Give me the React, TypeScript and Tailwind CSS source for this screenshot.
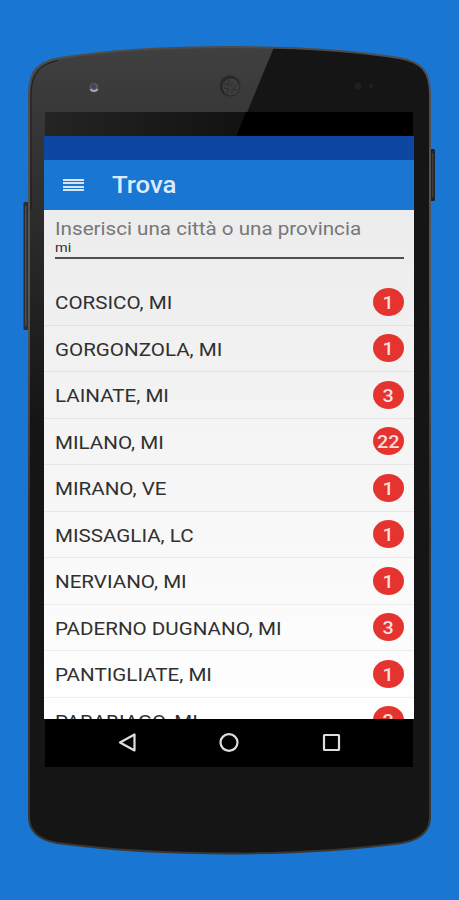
import { useState } from "react";

interface Place {
  name: string;
  count: number;
}

const places: Place[] = [
  { name: "CORSICO, MI", count: 1 },
  { name: "GORGONZOLA, MI", count: 1 },
  { name: "LAINATE, MI", count: 3 },
  { name: "MILANO, MI", count: 22 },
  { name: "MIRANO, VE", count: 1 },
  { name: "MISSAGLIA, LC", count: 1 },
  { name: "NERVIANO, MI", count: 1 },
  { name: "PADERNO DUGNANO, MI", count: 3 },
  { name: "PANTIGLIATE, MI", count: 1 },
  { name: "PARABIAGO, MI", count: 2 },
];

const BODY =
  "M29 95 C29 70 38 62 60 58 C110 50 165 47 230 47 C295 47 350 50 399 58 C421 62 430 70 430 95 V817 C430 832 419 840 402 843 C350 850 290 853.5 230 853.5 C170 853.5 110 850 57 843 C40 840 29 832 29 817 Z";

function PhoneFrame() {
  return (
    <svg className="absolute inset-0" width="459" height="900" viewBox="0 0 459 900" aria-hidden="true">
      <defs>
        <linearGradient id="glare" x1="0" y1="46" x2="0" y2="420" gradientUnits="userSpaceOnUse">
          <stop offset="0" stopColor="#404040" />
          <stop offset="0.2" stopColor="#373737" />
          <stop offset="1" stopColor="#151515" />
        </linearGradient>
        <linearGradient id="bar" x1="0" y1="0" x2="1" y2="0">
          <stop offset="0" stopColor="#242424" />
          <stop offset="1" stopColor="#121212" />
        </linearGradient>
        <linearGradient id="rim" x1="0" y1="46" x2="0" y2="854" gradientUnits="userSpaceOnUse">
          <stop offset="0" stopColor="#4c4c4b" />
          <stop offset="0.3" stopColor="#575757" />
          <stop offset="0.6" stopColor="#32302d" />
          <stop offset="1" stopColor="#3a3733" />
        </linearGradient>
        <clipPath id="body">
          <path d={BODY} />
        </clipPath>
      </defs>
      {/* side buttons */}
      <rect x="23.5" y="202" width="7" height="128" rx="1.5" fill="#2b2d30" />
      <rect x="25" y="206" width="1.5" height="120" fill="#4c4d50" />
      <rect x="429" y="149" width="6" height="52" rx="1.5" fill="#232323" />
      <rect x="432" y="153" width="1.5" height="44" fill="#3d3d3d" />
      <path d={BODY} fill="#151515" />
      <g clipPath="url(#body)">
        <path d="M20 40 H277 L190 250 H45 V430 H20 Z" fill="url(#glare)" />
      </g>
      <path d={BODY} fill="none" stroke="url(#rim)" strokeWidth="2" />
      <path d="M31 210 V97 C31 75 38 65 58 60.5" fill="none" stroke="#1c1c1c" strokeWidth="1" />
      {/* black glass around the display */}
      <rect x="45" y="112" width="368" height="25" fill="#000" />
      <path d="M45 112 H246 L236 137 H45 Z" fill="url(#bar)" />
      {/* light sensor, speaker, proximity dots */}
      <circle cx="94" cy="87.5" r="4.5" fill="#5a585e" />
      <path d="M90.5 89 A4 4 0 0 0 97.5 89" fill="none" stroke="#a9a7ae" strokeWidth="2" />
      <circle cx="93.5" cy="86.5" r="2.5" fill="#45426a" />
      <circle cx="230" cy="86" r="10.5" fill="#292929" />
      <circle cx="231" cy="87" r="8.5" fill="#3e3e3e" />
      <path
        d="M224 83 l4 3 M229 80 l-1 5 M233 82 l-3 5 M238 84 l-5 3 M224 88 l5 1 M227 93 l2 -4 M232 94 l0 -5 M237 90 l-5 -1"
        stroke="#323232"
        strokeWidth="1.3"
        fill="none"
      />
      <circle cx="358" cy="86" r="3.5" fill="#1f1f1f" />
      <circle cx="371" cy="86" r="2.2" fill="#1f1f1f" />
    </svg>
  );
}

function AppBar() {
  return (
    <header className="mt-6 h-[74px] shrink-0 bg-[#1976d2]">
      <div className="h-6 bg-[#0d47a1]" />
      <div className="flex h-[50px] items-center pl-[19px]">
        <button className="flex w-[21px] flex-col gap-[1.5px]" aria-label="Menu">
          <span className="h-[2px] bg-[#d5e6f7]" />
          <span className="h-[2px] bg-[#d5e6f7]" />
          <span className="h-[2px] bg-[#d5e6f7]" />
          <span className="h-[2px] bg-[#d5e6f7]" />
        </button>
        <h1 className="ml-[28px] origin-left scale-x-[1.12] pt-[3px] text-[23px] font-medium text-[#dcebfa]">Trova</h1>
      </div>
    </header>
  );
}

function PlaceRow({ name, count }: Place) {
  return (
    <li className="flex h-[46.5px] shrink-0 items-center justify-between border-b border-black/6 pr-[10px] pl-[11px]">
      <span className="origin-left scale-x-[1.083] pt-[3px] text-[19px] whitespace-nowrap text-[#303030]">{name}</span>
      <span className="flex h-7 w-[31px] items-center justify-center rounded-[50%] bg-[#e53430] text-[18px] text-[#fbdedd]">
        <span className="scale-x-[1.1] pt-px font-medium">{count}</span>
      </span>
    </li>
  );
}

function NavBar() {
  return (
    <nav className="mx-px h-[48px] shrink-0 bg-black">
      <svg width="368" height="48" viewBox="0 0 368 48" fill="none" stroke="#dedede" strokeWidth="2.2">
        <path d="M75 23.5 L89.5 15.5 V31.5 Z" strokeLinejoin="round" />
        <ellipse cx="184" cy="23.5" rx="8.5" ry="8.3" />
        <rect x="279" y="16" width="15" height="15" rx="0.5" />
      </svg>
    </nav>
  );
}

export default function App() {
  const [query, setQuery] = useState("mi");

  return (
    <div className="relative h-[900px] w-[459px] overflow-hidden bg-[#1976d2] font-[Roboto,sans-serif]">
      <PhoneFrame />
      <div className="relative mt-[112px] ml-[44px] flex h-[655px] w-[370px] flex-col">
        <AppBar />
        <main className="flex h-[509px] shrink-0 flex-col overflow-hidden bg-linear-to-b from-[#ececec] to-white">
          <div className="mr-[10px] ml-[11px] h-[49px] shrink-0 border-b-2 border-[#505050]">
            <label
              htmlFor="place"
              className="mt-[7px] block h-[24px] origin-left scale-x-[1.085] text-[19px] leading-[23px] whitespace-nowrap text-[#777777]"
            >
              Inserisci una città o una provincia
            </label>
            <input
              id="place"
              value={query}
              onChange={(e) => setQuery(e.target.value)}
              className="block h-[14px] w-72 origin-left scale-x-[1.2] text-[12px] leading-[14px] text-[#303030] outline-none"
            />
          </div>
          <ul className="mt-5 flex flex-col">
            {places.map((place) => (
              <PlaceRow key={place.name} {...place} />
            ))}
          </ul>
        </main>
        <NavBar />
      </div>
    </div>
  );
}
